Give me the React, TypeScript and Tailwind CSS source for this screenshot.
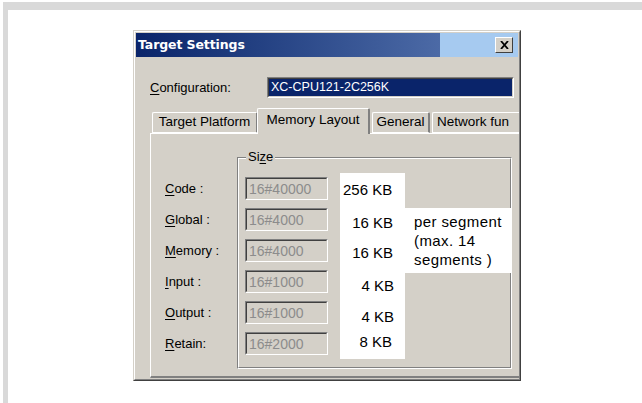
import React from "react";

const face = "bg-[#d4d0c8]";

function Ul({ children }: { children: React.ReactNode }) {
  return <span className="underline underline-offset-[2px] decoration-[1px]">{children}</span>;
}

function SunkenField({ value }: { value: string }) {
  return (
    <div className="h-[23px] w-[83px] border-t border-l border-[#808080] border-b-white border-r-white border-b border-r">
      <div className="h-full border-t border-l border-[#404040] border-b-[#d4d0c8] border-r-[#d4d0c8] border-b border-r flex items-center pl-[2px] text-[14px] text-[#8c8c8c] leading-none">
        {value}
      </div>
    </div>
  );
}

function CloseButton() {
  return (
    <div className="w-[18px] h-[16px] bg-[#d4d0c8] border-t border-l border-white border-b-[#404040] border-r-[#404040] border-b border-r flex items-center justify-center">
      <svg width="9" height="8" viewBox="0 0 9 8">
        <path d="M1 0 L8 8 M8 0 L1 8" stroke="#000" strokeWidth="1.8" />
      </svg>
    </div>
  );
}

type Tab = { label: string; active?: boolean; w: string; ml: string };

const tabs: Tab[] = [
  { label: "Target Platform", w: "w-[106px]", ml: "ml-[2px]" },
  { label: "Memory Layout", active: true, w: "w-[113px]", ml: "-ml-[1px]" },
  { label: "General", w: "w-[58px]", ml: "ml-[2px]" },
  { label: "Network fun", w: "w-[140px]", ml: "ml-[2px]" },
];

const rows = [
  { label: "Code :", key: "C", rest: "ode :", value: "16#40000" },
  { label: "Global :", key: "G", rest: "lobal :", value: "16#4000" },
  { label: "Memory :", key: "M", rest: "emory :", value: "16#4000" },
  { label: "Input :", key: "I", rest: "nput :", value: "16#1000" },
  { label: "Output :", key: "O", rest: "utput :", value: "16#1000" },
  { label: "Retain:", key: "R", rest: "etain:", value: "16#2000" },
];

const sizes = [
  { text: "256 KB", h: "h-[34px]", align: "justify-start pl-[3px]" },
  { text: "16 KB", h: "h-[32px]", align: "justify-end pr-[12px]" },
  { text: "16 KB", h: "h-[28px]", align: "justify-end pr-[12px]" },
  { text: "4 KB", h: "h-[38px]", align: "justify-end pr-[11px]" },
  { text: "4 KB", h: "h-[24px]", align: "justify-end pr-[11px]" },
  { text: "8 KB", h: "h-[26px]", align: "justify-end pr-[13px]" },
];

export default function App() {
  return (
    <div className="w-[642px] h-[403px] bg-white overflow-hidden font-['Liberation_Sans',Arial,sans-serif] text-black">
      {/* page frame: top rule */}
      <div className="h-[2px]" />
      <div className="h-[8px] ml-[3px] bg-[#d9d9d9]" />
      <div className="flex">
        {/* page frame: left rule */}
        <div className="w-[5px] h-[393px] ml-[3px] bg-[#d9d9d9]" />
        <div className="pl-[125px] pt-[20px]">
          {/* dialog window */}
          <div className="w-[388px] h-[351px] border-t border-l border-[#d4d0c8] border-b-[#404040] border-r-[#404040] border-b border-r overflow-hidden">
            <div className={`h-full ${face} border-t border-l border-white border-b-[#808080] border-r-[#808080] border-b border-r p-[1px] flex flex-col overflow-hidden`}>
              {/* title bar */}
              <div className="h-[24px] flex shrink-0">
                <div className="flex-1 bg-gradient-to-r from-[#0a246a] to-[#4c6aa6] flex items-center pl-[2px]">
                  <span className="font-['DejaVu_Sans',sans-serif] font-bold text-[12.5px] text-white tracking-[-0.1px]">
                    Target Settings
                  </span>
                </div>
                <div className="w-[78px] bg-[#a6caf0] flex items-center justify-end pr-[5px]">
                  <CloseButton />
                </div>
              </div>

              {/* configuration row */}
              <div className="mt-[20px] flex items-center shrink-0">
                <div className="w-[131px] pl-[14px] text-[13px]">
                  <Ul>C</Ul>onfiguration:
                </div>
                <div className="flex-1 h-[21px] mr-[4px] border-t border-l border-[#808080] border-b-white border-r-white border-b border-r">
                  <div className="h-full border-t border-l border-[#404040] border-b-[#d4d0c8] border-r-[#d4d0c8] border-b border-r">
                    <div className="h-full bg-[#0a246a] text-white text-[12.5px] flex items-center pl-[2px]">
                      XC-CPU121-2C256K
                    </div>
                  </div>
                </div>
              </div>

              {/* tab strip */}
              <div className="mt-[10px] pl-[14px] flex items-end h-[25px] shrink-0 relative z-10">
                {tabs.map((t) => (
                  <div
                    key={t.label}
                    className={`${t.w} ${t.ml} shrink-0 overflow-hidden whitespace-nowrap text-[13.5px] flex items-center ${face} border-t border-l border-white border-r-[2px] border-r-[#808080] rounded-t-[2px] ${
                      t.active ? "h-[26px] -mb-[1px] pb-[3px]" : "h-[21px] border-b border-b-white"
                    } ${t.label.startsWith("Network") ? "justify-start pl-[4px]" : "justify-center"}`}
                  >
                    {t.label}
                  </div>
                ))}
              </div>

              {/* tab page */}
              <div className="ml-[14px] w-[400px] flex-1 border-t border-l border-white border-b-2 border-b-[#808080] flex">
                {/* field labels */}
                <div className="w-[86px] pl-[14px] pt-[43px] flex flex-col gap-[8px] text-[13px]">
                  {rows.map((r) => (
                    <div key={r.label} className="h-[23px] flex items-center">
                      <Ul>{r.key}</Ul>
                      {r.rest}
                    </div>
                  ))}
                </div>

                {/* Size group */}
                <div className="mt-[23px] h-[212px] w-[275px] border-t border-l border-[#808080] border-b-white border-r-white border-b border-r relative">
                  <div className="h-full border-t border-l border-white border-b-[#808080] border-r-[#808080] border-b border-r flex">
                    <div className="absolute -top-[9px] left-[8px] px-[2px] bg-[#d4d0c8] text-[13px] leading-[16px]">
                      Si<Ul>z</Ul>e
                    </div>
                    <div className="pl-[6px] pt-[18px] flex flex-col gap-[8px]">
                      {rows.map((r) => (
                        <SunkenField key={r.label} value={r.value} />
                      ))}
                    </div>
                    <div className="ml-[12px] mt-[14px] flex items-start text-[15px]">
                      <div className="w-[65px] h-[186px] bg-white flex flex-col">
                        {sizes.map((s, i) => (
                          <div key={i} className={`${s.h} flex items-center ${s.align}`}>
                            {s.text}
                          </div>
                        ))}
                      </div>
                      <div className="w-[107px] h-[65px] mt-[35px] bg-white pl-[9px] pt-[4px] leading-[19px] tracking-[0.4px]">
                        <div>per segment</div>
                        <div>(max. 14</div>
                        <div>segments )</div>
                      </div>
                    </div>
                  </div>
                </div>
              </div>
            </div>
          </div>
        </div>
      </div>
    </div>
  );
}
